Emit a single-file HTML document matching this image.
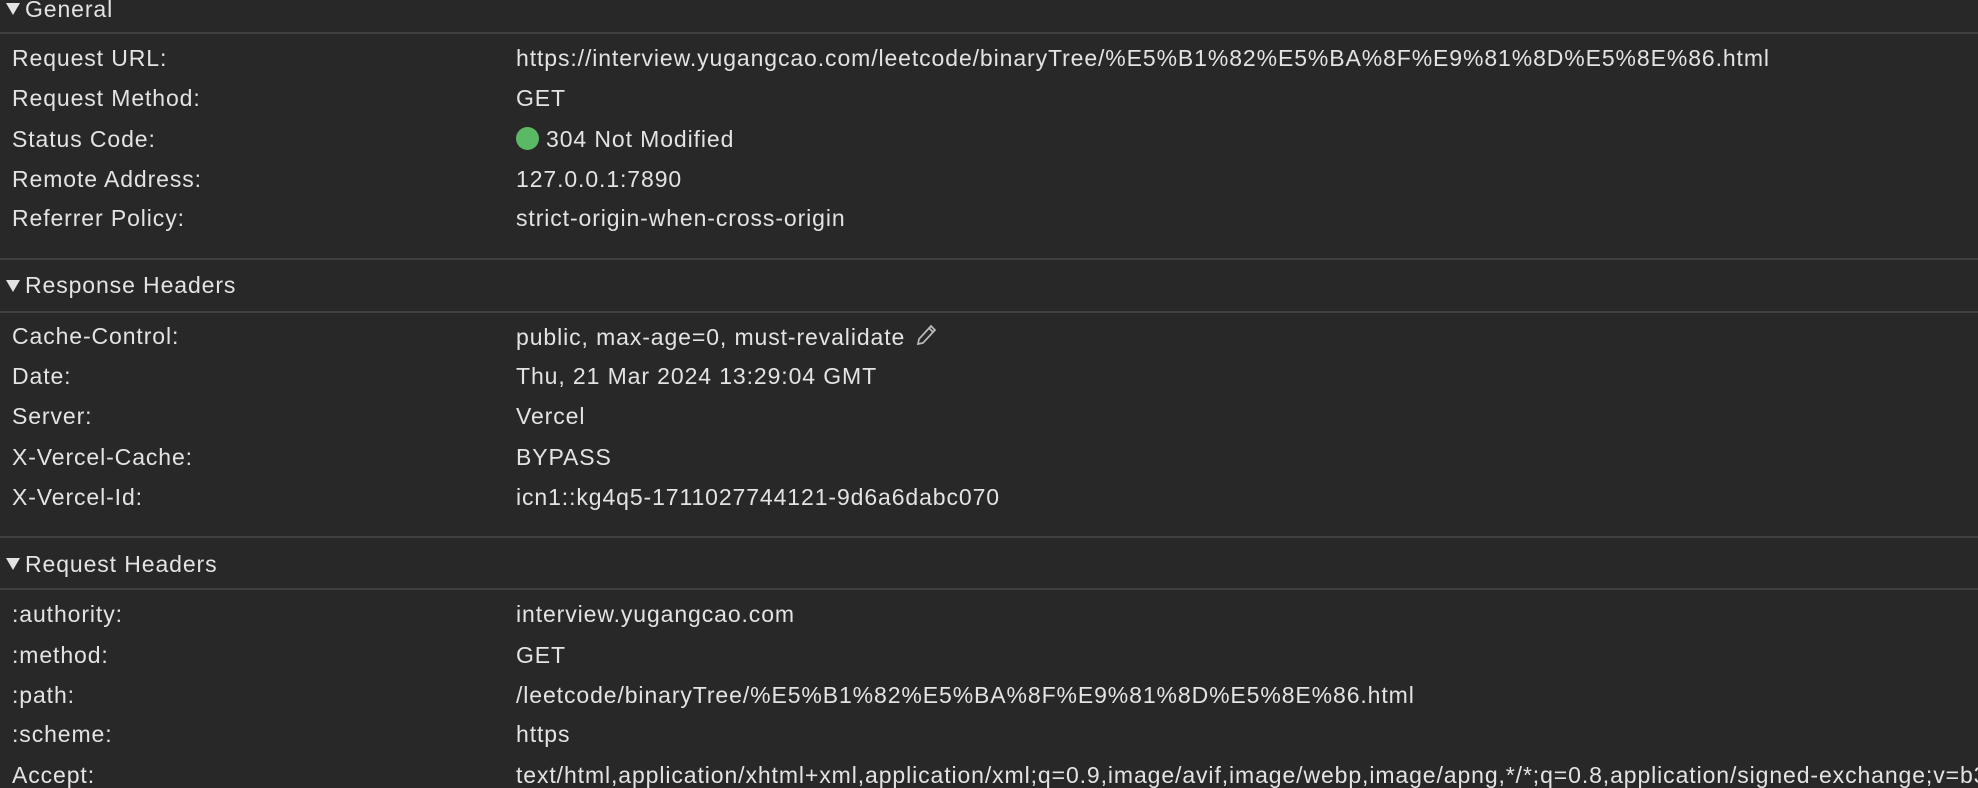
<!DOCTYPE html>
<html><head><meta charset="utf-8"><style>
body{margin:0;width:1978px;height:786px;background:#282828;font-family:"Liberation Sans",Arial,sans-serif;color:#e3e3e3;font-size:23px;letter-spacing:0.9px;position:relative;overflow:hidden}
.t{position:absolute;white-space:nowrap;line-height:26px}
.sep{position:absolute;left:0;width:1978px;height:2px;background:#404040}
.tri{position:absolute;width:0;height:0;border-left:7px solid transparent;border-right:7px solid transparent;border-top:12px solid #e3e3e3}
.dot{display:inline-block;width:23px;height:23px;border-radius:50%;background:#5bb865;vertical-align:-3px;margin-right:7px}
</style></head><body>
<div class="tri" style="left:6px;top:3px"></div><div class="t" style="left:25px;top:-4px">General</div>
<div class="sep" style="top:32px"></div>
<div class="t" style="left:12px;top:45px">Request URL:</div><div class="t" style="left:516px;top:45px">https://interview.yugangcao.com/leetcode/binaryTree/%E5%B1%82%E5%BA%8F%E9%81%8D%E5%8E%86.html</div>
<div class="t" style="left:12px;top:85px">Request Method:</div><div class="t" style="left:516px;top:85px">GET</div>
<div class="t" style="left:12px;top:126px">Status Code:</div><div class="t" style="left:516px;top:126px"><span class="dot"></span>304 Not Modified</div>
<div class="t" style="left:12px;top:166px">Remote Address:</div><div class="t" style="left:516px;top:166px">127.0.0.1:7890</div>
<div class="t" style="left:12px;top:205px">Referrer Policy:</div><div class="t" style="left:516px;top:205px">strict-origin-when-cross-origin</div>
<div class="sep" style="top:258px"></div>
<div class="tri" style="left:6px;top:280px"></div><div class="t" style="left:25px;top:272px">Response Headers</div>
<div class="sep" style="top:311px"></div>
<div class="t" style="left:12px;top:323px">Cache-Control:</div><div class="t" style="left:516px;top:323px">public, max-age=0, must-revalidate<svg width="24" height="24" viewBox="0 0 24 24" style="vertical-align:-2px;margin-left:10px"><path d="M3 21 L4 16 L16 3 L20 7 L8 20 Z M14 5 L18 9" fill="none" stroke="#bbb" stroke-width="1.7"/></svg></div>
<div class="t" style="left:12px;top:363px">Date:</div><div class="t" style="left:516px;top:363px">Thu, 21 Mar 2024 13:29:04 GMT</div>
<div class="t" style="left:12px;top:403px">Server:</div><div class="t" style="left:516px;top:403px">Vercel</div>
<div class="t" style="left:12px;top:444px">X-Vercel-Cache:</div><div class="t" style="left:516px;top:444px">BYPASS</div>
<div class="t" style="left:12px;top:484px">X-Vercel-Id:</div><div class="t" style="left:516px;top:484px">icn1::kg4q5-1711027744121-9d6a6dabc070</div>
<div class="sep" style="top:536px"></div>
<div class="tri" style="left:6px;top:558px"></div><div class="t" style="left:25px;top:551px">Request Headers</div>
<div class="sep" style="top:588px"></div>
<div class="t" style="left:12px;top:601px">:authority:</div><div class="t" style="left:516px;top:601px">interview.yugangcao.com</div>
<div class="t" style="left:12px;top:642px">:method:</div><div class="t" style="left:516px;top:642px">GET</div>
<div class="t" style="left:12px;top:682px">:path:</div><div class="t" style="left:516px;top:682px">/leetcode/binaryTree/%E5%B1%82%E5%BA%8F%E9%81%8D%E5%8E%86.html</div>
<div class="t" style="left:12px;top:721px">:scheme:</div><div class="t" style="left:516px;top:721px">https</div>
<div class="t" style="left:12px;top:762px">Accept:</div><div class="t" style="left:516px;top:762px">text/html,application/xhtml+xml,application/xml;q=0.9,image/avif,image/webp,image/apng,*/*;q=0.8,application/signed-exchange;v=b3;q=0.7</div>
</body></html>
